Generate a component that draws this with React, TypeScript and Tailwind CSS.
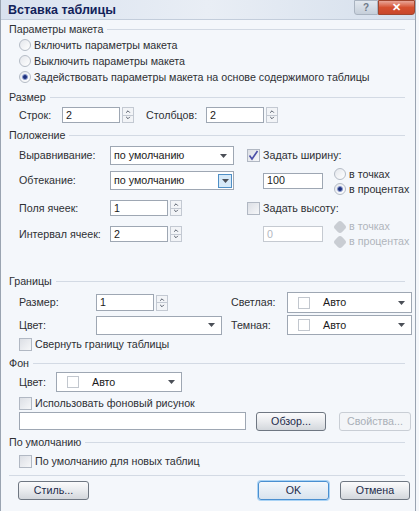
import React from "react";

const Header = ({ title, className = "" }: { title: string; className?: string }) => (
  <div className={`flex items-center h-[16px] pl-[8px] pr-[10px] ${className}`}>
    <span>{title}</span>
    <div className="flex-1 h-px bg-[#d3dae4] ml-[4px]" />
  </div>
);

const Radio = ({ checked = false, disabled = false }: { checked?: boolean; disabled?: boolean }) =>
  disabled ? (
    <span className="inline-block w-[10px] h-[10px] mx-[1px] rotate-45 rounded-[3px] bg-[#c9cdd3] shrink-0" />
  ) : (
    <span className="flex items-center justify-center w-[12px] h-[12px] rounded-full border border-[#b5bcc6] bg-gradient-to-br from-[#e4e7ec] to-[#ffffff] shrink-0">
      {checked && <span className="w-[6px] h-[6px] rounded-full bg-[#1c2f7a] border border-[#8a9ad0]" />}
    </span>
  );

const Check = ({ checked = false }: { checked?: boolean }) => (
  <span className="flex items-center justify-center w-[13px] h-[13px] border border-[#b1b8c3] bg-gradient-to-br from-[#dcdfe5] to-[#f6f7f9] shrink-0">
    {checked && (
      <svg width="11" height="11" viewBox="0 0 11 11">
        <path d="M1.5 5.5 L4 9 L9.5 1" fill="none" stroke="#4b4fa8" strokeWidth="1.6" />
      </svg>
    )}
  </span>
);

const Box = ({ value = "", w, h = 16, disabled = false }: { value?: string; w: string; h?: number; disabled?: boolean }) => (
  <div
    className={`${w} flex items-center pl-[3px] border ${disabled ? "border-[#c5cad1] text-[#b3b8bf]" : "border-[#9ea7b3] text-[#1a1a1a]"} bg-white`}
    style={{ height: h }}
  >
    {value}
  </div>
);

const Spin = () => (
  <div className="ml-[2px] w-[12px] h-[16px] flex flex-col border border-[#c3c9d2] bg-[#f2f4f7]">
    <svg width="10" height="7" viewBox="0 0 10 7" className="mx-auto">
      <path d="M3 5 L5 3 L7 5" fill="none" stroke="#4a5260" strokeWidth="1" />
    </svg>
    <div className="h-px bg-[#c3c9d2]" />
    <svg width="10" height="7" viewBox="0 0 10 7" className="mx-auto">
      <path d="M3 2 L5 4 L7 2" fill="none" stroke="#4a5260" strokeWidth="1" />
    </svg>
  </div>
);

const Arrow = () => (
  <svg width="7" height="4" viewBox="0 0 7 4">
    <path d="M0 0 H7 L3.5 4 Z" fill="#4b4f57" />
  </svg>
);

const Select = ({
  value = "",
  w,
  h = 19,
  swatch = false,
  active = false,
}: {
  value?: string;
  w: string;
  h?: number;
  swatch?: boolean;
  active?: boolean;
}) => (
  <div className={`${w} flex items-center border border-[#9ea7b3] bg-white text-[#1a1a1a]`} style={{ height: h }}>
    {swatch && <span className="ml-[10px] w-[12px] h-[12px] border border-[#c2c7ce] bg-white shrink-0" />}
    <span className={swatch ? "ml-[13px]" : "ml-[3px]"}>{value}</span>
    <div className="flex-1" />
    {active ? (
      <div className="mr-[1px] w-[14px] h-[14px] flex items-center justify-center border border-[#4f8fc6] bg-[#d6e9f8]">
        <Arrow />
      </div>
    ) : (
      <div className="mr-[6px] flex items-center">
        <Arrow />
      </div>
    )}
  </div>
);

const Btn = ({ label, w, primary = false, disabled = false }: { label: string; w: string; primary?: boolean; disabled?: boolean }) => (
  <div
    className={`${w} h-[19px] flex items-center justify-center rounded-[3px] border ${
      primary
        ? "border-[#4a8fd0] bg-gradient-to-b from-[#f4f8fc] to-[#d8e3ee] shadow-[0_0_0_1px_#a9d3f5]"
        : disabled
        ? "border-[#c9ced5] bg-[#f3f5f8] text-[#a9afb7]"
        : "border-[#6f7782] bg-gradient-to-b from-[#fbfbfc] via-[#e9ebee] to-[#d3d7dc]"
    } ${disabled ? "" : "text-[#1d2b4a]"}`}
  >
    {label}
  </div>
);

export default function App() {
  return (
    <div className="w-[419px] h-[511px] bg-[#f4f7fb] font-['Liberation_Sans',Arial,sans-serif] text-[10.7px] leading-none text-[#2e3034] overflow-hidden">
      <div className="w-[416px] h-[511px] border-l border-r border-[#9aa4b1] flex flex-col">
        {/* title bar */}
        <div className="h-[20px] flex items-start bg-gradient-to-r from-[#d9e2ef] via-[#e9eef5] to-[#d5dfec] border-b border-[#c3cddb]">
          <span className="ml-[7px] mt-[4px] font-bold text-[12.5px] text-[#12225a]">Вставка таблицы</span>
          <div className="flex-1" />
          <div className="w-[24px] h-[15px] flex items-center justify-center bg-gradient-to-b from-[#e2e8ef] to-[#c6cfda] border border-[#a9b3c0] rounded-bl-[3px] text-[#6f7a88] text-[10px] font-bold">
            ?
          </div>
          <div className="w-[37px] h-[15px] flex items-center justify-center bg-gradient-to-b from-[#e8a597] via-[#d5502f] to-[#c8472c] border border-[#a0462f] rounded-br-[3px] text-white text-[11px] font-bold">
            ✕
          </div>
        </div>

        {/* Параметры макета */}
        <Header title="Параметры макета" className="mt-[1px]" />
        {[
          ["Включить параметры макета", false],
          ["Выключить параметры макета", false],
          ["Задействовать параметры макета на основе содержимого таблицы", true],
        ].map(([t, c]) => (
          <div key={t as string} className="h-[16px] flex items-center pl-[18px]">
            <Radio checked={c as boolean} />
            <span className="ml-[3px]">{t as string}</span>
          </div>
        ))}

        {/* Размер */}
        <Header title="Размер" className="mt-[4px]" />
        <div className="mt-[1px] h-[18px] flex items-center pl-[18px]">
          <span className="w-[43px]">Строк:</span>
          <Box value="2" w="w-[58px]" />
          <Spin />
          <span className="ml-[12px] w-[60px]">Столбцов:</span>
          <Box value="2" w="w-[58px]" />
          <Spin />
        </div>

        {/* Положение */}
        <Header title="Положение" className="mt-[3px]" />
        <div className="mt-[3px] h-[19px] flex items-center pl-[18px]">
          <span className="w-[91px]">Выравнивание:</span>
          <Select value="по умолчанию" w="w-[124px]" />
          <div className="ml-[13px] flex items-center">
            <Check checked />
            <span className="ml-[3px]">Задать ширину:</span>
          </div>
        </div>
        <div className="mt-[6px] h-[19px] flex items-center pl-[18px]">
          <span className="w-[91px]">Обтекание:</span>
          <Select value="по умолчанию" w="w-[124px]" active />
          <div className="ml-[29px] flex items-center">
            <Box value="100" w="w-[60px]" />
            <div className="ml-[11px] flex flex-col gap-[4px] mt-[2px]">
              <div className="flex items-center h-[11px]">
                <Radio />
                <span className="ml-[3px]">в точках</span>
              </div>
              <div className="flex items-center h-[11px]">
                <Radio checked />
                <span className="ml-[3px]">в процентах</span>
              </div>
            </div>
          </div>
        </div>
        <div className="mt-[10px] h-[16px] flex items-center pl-[18px]">
          <span className="w-[91px]">Поля ячеек:</span>
          <Box value="1" w="w-[58px]" />
          <Spin />
          <div className="ml-[65px] flex items-center">
            <Check />
            <span className="ml-[3px]">Задать высоту:</span>
          </div>
        </div>
        <div className="mt-[10px] h-[16px] flex items-center pl-[18px]">
          <span className="w-[91px]">Интервал ячеек:</span>
          <Box value="2" w="w-[58px]" />
          <Spin />
          <div className="ml-[81px] flex items-center">
            <Box value="0" w="w-[60px]" disabled />
            <div className="ml-[11px] flex flex-col gap-[4px] text-[#b0b5bc]">
              <div className="flex items-center h-[11px]">
                <Radio disabled />
                <span className="ml-[3px]">в точках</span>
              </div>
              <div className="flex items-center h-[11px]">
                <Radio disabled />
                <span className="ml-[3px]">в процентах</span>
              </div>
            </div>
          </div>
        </div>

        {/* Границы */}
        <Header title="Границы" className="mt-[31px]" />
        <div className="mt-[3px] h-[21px] flex items-center pl-[18px]">
          <div className="w-[212px] flex items-center">
            <span className="w-[77px]">Размер:</span>
            <Box value="1" w="w-[58px]" h={17} />
            <Spin />
          </div>
          <span className="w-[56px]">Светлая:</span>
          <Select value="Авто" w="w-[125px]" h={21} swatch />
        </div>
        <div className="mt-[2px] h-[20px] flex items-center pl-[18px]">
          <div className="w-[212px] flex items-center">
            <span className="w-[77px]">Цвет:</span>
            <Select w="w-[126px]" h={19} />
          </div>
          <span className="w-[56px]">Темная:</span>
          <Select value="Авто" w="w-[125px]" h={20} swatch />
        </div>
        <div className="mt-[1px] h-[16px] flex items-center pl-[18px]">
          <Check />
          <span className="ml-[3px]">Свернуть границу таблицы</span>
        </div>

        {/* Фон */}
        <Header title="Фон" className="mt-[3px]" />
        <div className="mt-[1px] h-[20px] flex items-center pl-[18px]">
          <span className="w-[37px]">Цвет:</span>
          <Select value="Авто" w="w-[126px]" h={20} swatch />
        </div>
        <div className="mt-[3px] h-[16px] flex items-center pl-[18px]">
          <Check />
          <span className="ml-[3px]">Использовать фоновый рисунок</span>
        </div>
        <div className="mt-[1px] h-[18px] flex items-center pl-[18px]">
          <Box w="w-[227px]" h={18} />
          <div className="ml-[10px]">
            <Btn label="Обзор..." w="w-[70px]" />
          </div>
          <div className="ml-[13px]">
            <Btn label="Свойства..." w="w-[72px]" disabled />
          </div>
        </div>

        {/* По умолчанию */}
        <Header title="По умолчанию" className="mt-[4px]" />
        <div className="mt-[3px] h-[16px] flex items-center pl-[18px]">
          <Check />
          <span className="ml-[3px]">По умолчанию для новых таблиц</span>
        </div>
        <div className="mt-[6px] ml-[8px] mr-[10px] h-px bg-[#d3dae4]" />
        <div className="mt-[5px] flex items-center pl-[17px]">
          <Btn label="Стиль..." w="w-[71px]" />
          <div className="flex-1" />
          <Btn label="OK" w="w-[71px]" primary />
          <div className="ml-[11px] mr-[5px]">
            <Btn label="Отмена" w="w-[70px]" />
          </div>
        </div>
      </div>
    </div>
  );
}
